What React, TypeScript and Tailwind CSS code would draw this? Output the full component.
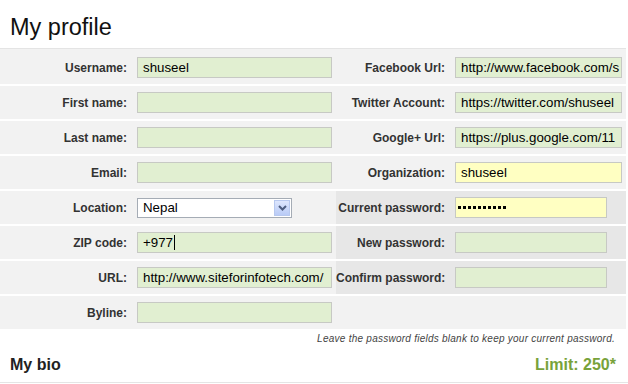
import React from "react";

const font = { fontFamily: '"Liberation Sans", Arial, sans-serif' };

type Field = {
  label: string;
  value?: string;
  kind?: "green" | "yellow" | "select" | "password" | "cursor" | "none";
  width?: number;
};

function Input({ f, wide }: { f: Field; wide: number }) {
  if (f.kind === "none") return null;
  if (f.kind === "select") {
    return (
      <div className="flex h-[20px] w-[155px] items-center border border-[#a5acb5] bg-white">
        <span className="flex-1 pl-[5px] text-[13.3px] leading-none text-black">{f.value}</span>
        <span className="mr-[1px] flex h-[16px] w-[16px] items-center justify-center border border-[#b7c8ef] bg-gradient-to-b from-[#dde6fd] to-[#b9cbf6]">
          <svg width="9" height="6" viewBox="0 0 9 6">
            <path d="M1 1 L4.5 4.5 L8 1" stroke="#4d5d80" strokeWidth="2" fill="none" />
          </svg>
        </span>
      </div>
    );
  }
  const yellow = f.kind === "yellow" || f.kind === "password";
  const w = f.width ?? wide;
  return (
    <div
      className={`flex h-[21px] items-center overflow-hidden whitespace-nowrap border border-[#c7c9c4] pl-[5px] text-[13.3px] leading-none text-black ${
        yellow ? "bg-[#ffffc2]" : "bg-[#e1efd1]"
      }`}
      style={{ width: w }}
    >
      {f.kind === "password" ? (
        <span className="ml-[-3px] flex gap-[2px]">
          {Array.from({ length: 10 }).map((_, i) => (
            <span key={i} className="h-[3px] w-[3px] bg-black" />
          ))}
        </span>
      ) : (
        <>
          <span>{f.value}</span>
          {f.kind === "cursor" && <span className="ml-[1px] h-[15px] w-[1px] bg-black" />}
        </>
      )}
    </div>
  );
}

const left: Field[] = [
  { label: "Username:", value: "shuseel" },
  { label: "First name:" },
  { label: "Last name:" },
  { label: "Email:" },
  { label: "Location:", value: "Nepal", kind: "select" },
  { label: "ZIP code:", value: "+977", kind: "cursor" },
  { label: "URL:", value: "http://www.siteforinfotech.com/" },
  { label: "Byline:" },
];

const right: (Field & { dark?: boolean })[] = [
  { label: "Facebook Url:", value: "http://www.facebook.com/s" },
  { label: "Twitter Account:", value: "https://twitter.com/shuseel" },
  { label: "Google+ Url:", value: "https://plus.google.com/11" },
  { label: "Organization:", value: "shuseel", kind: "yellow" },
  { label: "Current password:", kind: "password", width: 152, dark: true },
  { label: "New password:", width: 152, dark: true },
  { label: "Confirm password:", width: 152, dark: true },
  { label: "", kind: "none" },
];

export default function App() {
  return (
    <div className="h-[384px] w-[628px] overflow-hidden bg-white" style={font}>
      <div className="flex h-[48px] items-center pl-[10px] pt-[7px] text-[23.5px] leading-none text-[#111]">
        My profile
      </div>
      <div className="mr-[2px] flex border-t border-[#e4e4e4]">
        <div className="w-[336px]">
          {left.map((f, i) => (
            <div
              key={i}
              className={`flex h-[35px] items-center border-t-2 bg-[#f2f2f2] ${
                i === 0 ? "border-[#f2f2f2]" : "border-white"
              }`}
            >
              <div className="w-[127px] text-right text-[12px] font-bold text-[#333]">{f.label}</div>
              <div className="ml-[10px]">
                <Input f={f} wide={195} />
              </div>
            </div>
          ))}
        </div>
        <div className="flex-1">
          {right.map((f, i) => (
            <div
              key={i}
              className={`flex h-[35px] items-center border-t-2 ${
                i === 0 ? "border-[#f2f2f2]" : "border-white"
              } ${f.dark ? "bg-[#e7e7e7]" : "bg-[#f2f2f2]"}`}
            >
              <div className="w-[109px] whitespace-nowrap text-right text-[12px] font-bold text-[#333]">
                {f.label}
              </div>
              <div className="ml-[10px]">
                <Input f={f} wide={167} />
              </div>
            </div>
          ))}
        </div>
      </div>
      <div className="mt-[2px] pr-[13px] text-right text-[10px] italic tracking-[0.25px] text-[#444]">
        Leave the password fields blank to keep your current password.
      </div>
      <div className="mt-[1px] flex h-[36px] items-center justify-between border-b border-[#e5e5e5] pl-[10px] pr-[12px]">
        <span className="text-[16px] font-bold text-[#222]">My bio</span>
        <span className="text-[16px] font-bold text-[#78a23a]">Limit: 250*</span>
      </div>
    </div>
  );
}
